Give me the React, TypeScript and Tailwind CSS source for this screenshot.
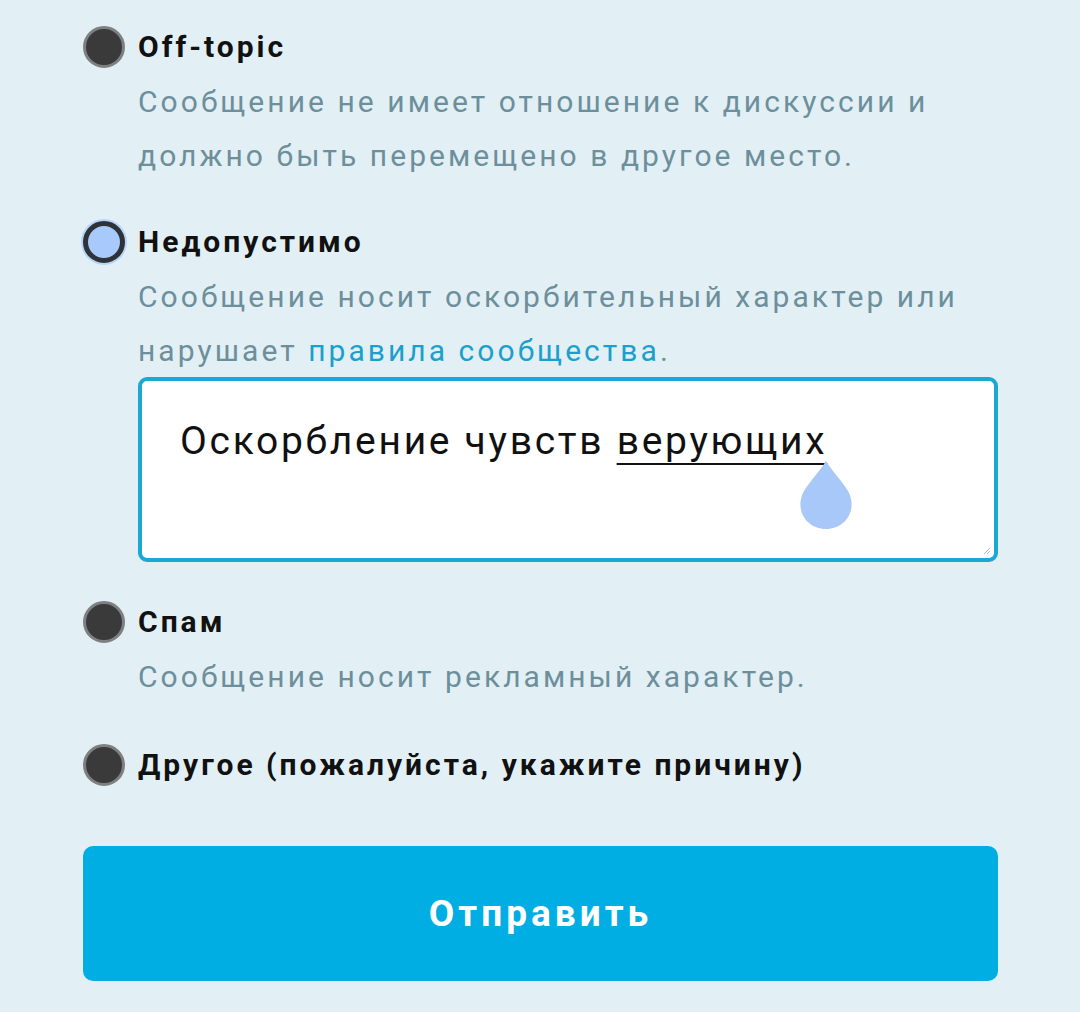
import React from "react"

const Radio = ({ checked }: { checked?: boolean }) =>
  checked ? (
    <div className="w-[42px] h-[42px] shrink-0 rounded-full bg-[#a7c9fb] border-[5px] border-[#2e3338] ring-2 ring-[#a7c9fb]/70" />
  ) : (
    <div className="w-[42px] h-[42px] shrink-0 rounded-full bg-[#3a3a3a] border-[3px] border-[#7d7f80]" />
  )

const Option = ({
  title,
  checked,
  children,
}: {
  title: string
  checked?: boolean
  children?: React.ReactNode
}) => (
  <div className="flex flex-col">
    <div className="flex items-center gap-[13px] h-[44px]">
      <Radio checked={checked} />
      <span className="text-[30px] font-bold text-[#111] leading-[44px] tracking-[3px]">{title}</span>
    </div>
    {children && <div className="pl-[55px] mt-[6px]">{children}</div>}
  </div>
)

const Desc = ({ children }: { children: React.ReactNode }) => (
  <p className="text-[30px] leading-[54px] text-[#6d8f9b] tracking-[3.05px] w-[860px]">{children}</p>
)

export default function App() {
  return (
    <div
      className="w-[1080px] h-[1012px] bg-[#e2f0f5] overflow-hidden"
      style={{ fontFamily: "Roboto, 'Noto Sans', sans-serif" }}
    >
      <div className="pl-[83px] pr-[82px] pt-[25px] flex flex-col">
        <Option title="Off-topic">
          <Desc>Сообщение не имеет отношение к дискуссии и должно быть перемещено в другое место.</Desc>
        </Option>

        <div className="mt-[37px]">
          <Option title="Недопустимо" checked>
            <Desc>
              Сообщение носит оскорбительный характер или нарушает{" "}
              <span className="text-[#1aa0cc]">правила сообщества</span>.
            </Desc>
            <div className="relative mt-[-1px] h-[185px] w-[860px] bg-white border-[4px] border-[#1ba8d7] rounded-[9px]">
              <div className="pl-[38px] pt-[36px] text-[39px] leading-[48px] text-[#111] tracking-[2.7px]">
                Оскорбление чувств{" "}
                <span className="underline decoration-[2px] underline-offset-[9px]">верующих</span>
              </div>
              <svg
                className="absolute left-[656px] top-[80px]"
                width="56"
                height="68"
                viewBox="0 0 56 68"
              >
                <path d="M28 0 C34 10 44 20 50 30 C60 48 48 68 28 68 C8 68 -4 48 6 30 C12 20 22 10 28 0 Z" fill="#a8c8fa" />
              </svg>
              <svg className="absolute right-[3px] bottom-[3px]" width="8" height="8" viewBox="0 0 8 8">
                <path d="M1 7 L7 1 M4 7 L7 4" stroke="#9aa" strokeWidth="0.8" />
              </svg>
            </div>
          </Option>
        </div>

        <div className="mt-[38px]">
          <Option title="Спам">
            <Desc>Сообщение носит рекламный характер.</Desc>
          </Option>
        </div>

        <div className="mt-[39px]">
          <Option title="Другое (пожалуйста, укажите причину)" />
        </div>

        <button className="mt-[59px] w-[915px] h-[135px] rounded-[10px] bg-[#00aee3] text-white text-[37px] font-bold tracking-[4px]">
          Отправить
        </button>
      </div>
    </div>
  )
}
